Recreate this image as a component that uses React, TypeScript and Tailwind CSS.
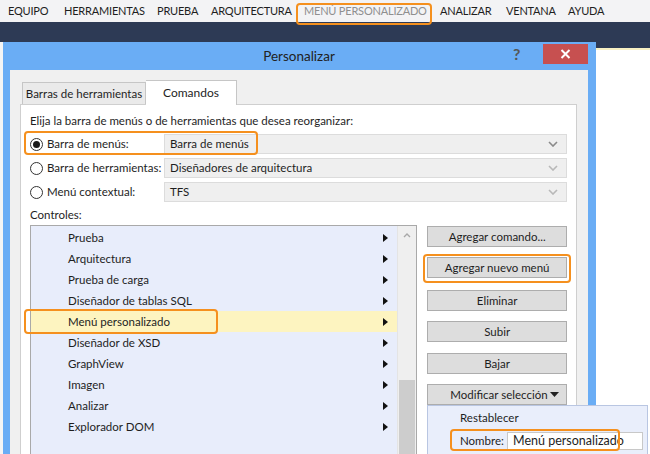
import React from "react";

const menus: [string, string][] = [
  ["EQUIPO", "w-[56px]"],
  ["HERRAMIENTAS", "w-[93px]"],
  ["PRUEBA", "w-[54px]"],
  ["ARQUITECTURA", "w-[93px]"],
  ["MENÚ PERSONALIZADO", "w-[136px]"],
  ["ANALIZAR", "w-[66px]"],
  ["VENTANA", "w-[62px]"],
  ["AYUDA", "w-[60px]"],
];

const items = [
  "Prueba",
  "Arquitectura",
  "Prueba de carga",
  "Diseñador de tablas SQL",
  "Menú personalizado",
  "Diseñador de XSD",
  "GraphView",
  "Imagen",
  "Analizar",
  "Explorador DOM",
];

const Chevron = ({ color }: { color: string }) => (
  <svg width="10" height="6" viewBox="0 0 10 6">
    <path d="M1 1 L5 5 L9 1" fill="none" stroke={color} strokeWidth="1.6" />
  </svg>
);

const Radio = ({ checked }: { checked?: boolean }) => (
  <div className="shrink-0 w-[13px] h-[13px] rounded-full border border-[#333] bg-white flex items-center justify-center">
    {checked && <div className="w-[7px] h-[7px] rounded-full bg-[#1a1a1a]" />}
  </div>
);

const Combo = ({ text, dark }: { text: string; dark?: boolean }) => (
  <div className="flex-1 h-[20px] bg-[#efefef] border border-[#dcdcdc] flex items-center pl-[5px] pr-[8px]">
    <span className="flex-1">{text}</span>
    <Chevron color={dark ? "#8a8a8a" : "#b8b8b8"} />
  </div>
);

const Btn = ({ children, className = "" }: { children: React.ReactNode; className?: string }) => (
  <div className={`h-[21px] bg-[#dddddd] border border-[#adadad] flex items-center justify-center ${className}`}>
    {children}
  </div>
);

export default function App() {
  return (
    <div
      className="relative w-[650px] h-[454px] overflow-hidden bg-white text-[11.5px] text-[#1e1e1e]"
      style={{ fontFamily: 'Lato, "Liberation Sans", sans-serif' }}
    >
      {/* VS menu bar */}
      <div className="h-[22px] bg-[#f3f3f5] flex items-center pl-[8px] text-[11px] tracking-[-0.2px] whitespace-nowrap">
        {menus.map(([m, w]) => (
          <span key={m} className={`${w} ${m === "MENÚ PERSONALIZADO" ? "text-[#8f8f8f]" : "text-[#1e1e1e]"}`}>
            {m}
          </span>
        ))}
      </div>
      <div className="h-[20px] bg-[#2d3a55]" />

      <div className="flex h-[412px]">
        <div className="w-[3px] bg-[#f5f5f5]" />
        {/* dialog */}
        <div className="w-[593px] bg-[#6aadf5] flex flex-col pl-[7px] pr-[8px]">
          <div className="h-[31px] flex items-center">
            <div className="flex-1 text-center text-[13.5px] text-[#222] pl-[75px] pt-[1px]">Personalizar</div>
            <div className="w-[20px] text-[16px] font-bold text-[#555] mr-[10px] mb-[4px]">?</div>
            <div className="w-[45px] h-[20px] bg-[#c75050] flex items-center justify-center self-start mt-[2px]">
              <svg width="11" height="10" viewBox="0 0 11 10">
                <path d="M1.5 1 L9.5 9 M9.5 1 L1.5 9" stroke="white" strokeWidth="2" />
              </svg>
            </div>
          </div>
          <div className="flex-1 bg-[#f0f0f0] pl-[10px] pr-[11px] pt-[10px] flex flex-col">
            {/* tabs */}
            <div className="flex items-end h-[24px] pl-[2px] whitespace-nowrap">
              <div className="h-[22px] w-[124px] border border-[#c6c6c6] border-b-0 bg-[#eaeaea] flex items-center justify-center">
                Barras de herramientas
              </div>
              <div className="h-[25px] w-[91px] border border-[#c6c6c6] border-b-0 border-l-0 bg-white flex items-center justify-center text-[12px] -mb-px relative">
                Comandos
              </div>
            </div>
            <div className="flex-1 bg-white border border-[#cfcfcf] pl-[9px] pr-[9px] pt-[8px]">
              <div className="h-[16px] leading-[16px]">Elija la barra de menús o de herramientas que desea reorganizar:</div>
              <div className="mt-[5px] flex flex-col gap-[4px]">
                <div className="flex items-center">
                  <div className="w-[134px] flex items-center gap-[4px] whitespace-nowrap">
                    <Radio checked />
                    <span>Barra de menús:</span>
                  </div>
                  <Combo text="Barra de menús" dark />
                </div>
                <div className="flex items-center">
                  <div className="w-[134px] flex items-center gap-[4px] whitespace-nowrap">
                    <Radio />
                    <span>Barra de herramientas:</span>
                  </div>
                  <Combo text="Diseñadores de arquitectura" />
                </div>
                <div className="flex items-center">
                  <div className="w-[134px] flex items-center gap-[4px] whitespace-nowrap">
                    <Radio />
                    <span>Menú contextual:</span>
                  </div>
                  <Combo text="TFS" />
                </div>
              </div>
              <div className="mt-[5px] h-[16px] leading-[16px]">Controles:</div>
              <div className="mt-[2px] flex gap-[10px]">
                <div className="w-[388px] h-[240px] border border-[#a9a9a9] border-b-0 flex">
                  <div className="flex-1 bg-[#e8edfb] pt-[1px]">
                    {items.map((it) => (
                      <div
                        key={it}
                        className={`h-[21px] flex items-center pl-[37px] pr-[9px] ${
                          it === "Menú personalizado" ? "bg-[#fdf4c0]" : ""
                        }`}
                      >
                        <span className="flex-1">{it}</span>
                        <svg width="5" height="8" viewBox="0 0 5 8">
                          <path d="M0 0 L5 4 L0 8 Z" fill="#111" />
                        </svg>
                      </div>
                    ))}
                  </div>
                  <div className="w-[19px] bg-[#efefef] flex flex-col border-l border-[#e4e4e4]">
                    <div className="h-[16px] flex items-center justify-center pt-[2px]">
                      <svg width="8" height="5" viewBox="0 0 8 5">
                        <path d="M1 4 L4 1 L7 4" fill="none" stroke="#a8a8a8" strokeWidth="1.4" />
                      </svg>
                    </div>
                    <div className="h-[138px]" />
                    <div className="flex-1 bg-[#cdcdcd] mx-[1px]" />
                  </div>
                </div>
                <div className="w-[140px] flex flex-col whitespace-nowrap pt-[1px]">
                  <Btn>Agregar comando...</Btn>
                  <Btn className="mt-[10px]">Agregar nuevo menú</Btn>
                  <Btn className="mt-[12px]">Eliminar</Btn>
                  <Btn className="mt-[10px]">Subir</Btn>
                  <Btn className="mt-[11px]">Bajar</Btn>
                  <div className="mt-[10px] h-[21px] bg-[#dddddd] border border-[#adadad] flex items-center pl-[22px] pr-[7px]">
                    <span className="flex-1">Modificar selección</span>
                    <svg width="9" height="5" viewBox="0 0 9 5">
                      <path d="M0 0 L9 0 L4.5 5 Z" fill="#222" />
                    </svg>
                  </div>
                </div>
              </div>
            </div>
          </div>
        </div>
        <div className="flex-1 flex flex-col">
          <div className="h-[6px] bg-[#2d3a55]" />
          <div className="h-[2px] bg-[#f8f0c4]" />
          <div className="flex-1 bg-white" />
        </div>
      </div>

      {/* dropdown menu of Modificar selección */}
      <div className="absolute left-[427px] top-[405px] w-[221px] h-[60px] bg-[#e9eefb] border border-[#b9c6e2] pl-[32px] pt-[2px] whitespace-nowrap">
        <div className="h-[20px] flex items-center">Restablecer</div>
        <div className="mt-[4px] flex items-center h-[18px]">
          <span className="w-[47px]">Nombre:</span>
          <div className="w-[136px] h-[18px] bg-white border border-[#c8c8c8] flex items-center pl-[5px] text-[12.5px]">
            Menú personalizado
          </div>
        </div>
      </div>

      {/* orange highlights */}
      <div className="absolute left-[296px] top-[3px] w-[136px] h-[22px] border-2 border-[#f5901e] rounded-[4px]" />
      <div className="absolute left-[24px] top-[131px] w-[234px] h-[24px] border-2 border-[#f5901e] rounded-[4px]" />
      <div className="absolute left-[24px] top-[309px] w-[194px] h-[25px] border-2 border-[#f5901e] rounded-[4px]" />
      <div className="absolute left-[423px] top-[254px] w-[148px] h-[29px] border-2 border-[#f5901e] rounded-[4px]" />
      <div className="absolute left-[450px] top-[429px] w-[170px] h-[22px] border-2 border-[#f5901e] rounded-[4px]" />
    </div>
  );
}
